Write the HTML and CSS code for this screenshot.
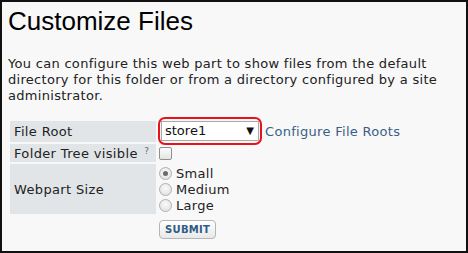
FILE: index.html
```html
<!DOCTYPE html>
<html>
<head>
<meta charset="utf-8">
<link rel="stylesheet" href="styles.css">
</head>
<body>
<div class="frame">
  <h1 class="title">Customize Files</h1>
  <p class="desc">You can configure this web part to show files from the default directory for this folder or from a directory configured by a site administrator.</p>
  <table class="form">
    <tr>
      <td class="label">File Root</td>
      <td class="field">
        <div class="row">
          <span class="highlight">
            <span class="select"><span class="sel-text">store1</span><span class="arrow">&#9660;</span></span>
          </span>
          <a class="link">Configure File Roots</a>
        </div>
      </td>
    </tr>
    <tr>
      <td class="label">Folder Tree visible <sup class="help">?</sup></td>
      <td class="field"><span class="checkbox"></span></td>
    </tr>
    <tr>
      <td class="label">Webpart Size</td>
      <td class="field">
        <div class="radios">
          <div class="radio-row"><span class="radio checked"></span>Small</div>
          <div class="radio-row"><span class="radio"></span>Medium</div>
          <div class="radio-row"><span class="radio"></span>Large</div>
        </div>
      </td>
    </tr>
    <tr>
      <td></td>
      <td class="field"><span class="button">SUBMIT</span></td>
    </tr>
  </table>
</div>
</body>
</html>
```
FILE: styles.css
```css
html, body { margin: 0; padding: 0; }
body { width: 468px; height: 253px; overflow: hidden; }
.frame {
  box-sizing: border-box;
  width: 468px;
  height: 253px;
  border: 2px solid #111;
  background: #f8f8f8;
  padding: 4px 6px 0 6px;
  font-family: "DejaVu Sans", Verdana, sans-serif;
  font-size: 13px;
  letter-spacing: 0.3px;
  color: #222;
}
.title {
  margin: 0;
  font-family: "Liberation Sans", Arial, sans-serif;
  font-weight: normal;
  font-size: 26px;
  line-height: 30px;
  letter-spacing: 0;
  color: #000;
}
.desc {
  margin: 20px 0 0 0;
  line-height: 16px;
}
.form {
  margin-top: 15px;
  border-collapse: separate;
  border-spacing: 2px;
}
.form td { padding: 0; vertical-align: middle; }
.label {
  width: 146px;
  box-sizing: border-box;
  background: #e2e5e8;
  padding-left: 4px !important;
  white-space: nowrap;
  letter-spacing: 0.35px;
}
.form tr:nth-child(1) .label { height: 21px; }
.form tr:nth-child(2) .label { height: 18px; }
.form tr:nth-child(3) .label { height: 50px; }
.help { font-size: 9px; color: #5a6a7a; vertical-align: 4px; margin-left: 2px; }
.row { display: flex; align-items: center; height: 21px; }
.highlight {
  display: inline-flex;
  border: 2px solid #e8121d;
  border-radius: 7px;
  padding: 2px 1px;
  margin: -3px 0 -1px 0;
}
.select {
  display: inline-flex;
  align-items: center;
  justify-content: space-between;
  box-sizing: border-box;
  width: 98px;
  height: 20px;
  background: #fff;
  border: 1px solid #a9a9a9;
  padding: 0 4px 0 3px;
  color: #111;
  letter-spacing: 0;
}
.arrow { font-size: 10px; color: #111; }
.link {
  margin-left: 3px;
  color: #3a5f86;
}
.checkbox {
  display: block;
  width: 11px;
  height: 11px;
  border: 1px solid #8f8f8f;
  border-radius: 2px;
  background: linear-gradient(#fcfcfc, #e4e4e4);
  margin-left: 1px;
}
.radios { display: flex; flex-direction: column; margin-left: 1px; }
.radio-row { display: flex; align-items: center; height: 16px; }
.radio {
  display: inline-block;
  box-sizing: border-box;
  width: 13px;
  height: 13px;
  border-radius: 50%;
  border: 1px solid #b0b0b0;
  background: radial-gradient(circle at 50% 40%, #fafafa, #dcdcdc);
  margin-right: 4px;
  position: relative;
}
.radio.checked::after {
  content: "";
  position: absolute;
  left: 3px; top: 3px;
  width: 5px; height: 5px;
  border-radius: 50%;
  background: #6a6a6a;
}
.button {
  display: inline-block;
  margin-top: 4px;
  margin-left: 1px;
  box-sizing: border-box;
  height: 19px;
  padding: 0 5px;
  line-height: 17px;
  border: 1px solid #b5b5b5;
  border-radius: 4px;
  background: linear-gradient(#ffffff, #e8e8e8);
  font-size: 10px;
  font-weight: bold;
  color: #2f5b87;
  letter-spacing: 0.3px;
}
```
